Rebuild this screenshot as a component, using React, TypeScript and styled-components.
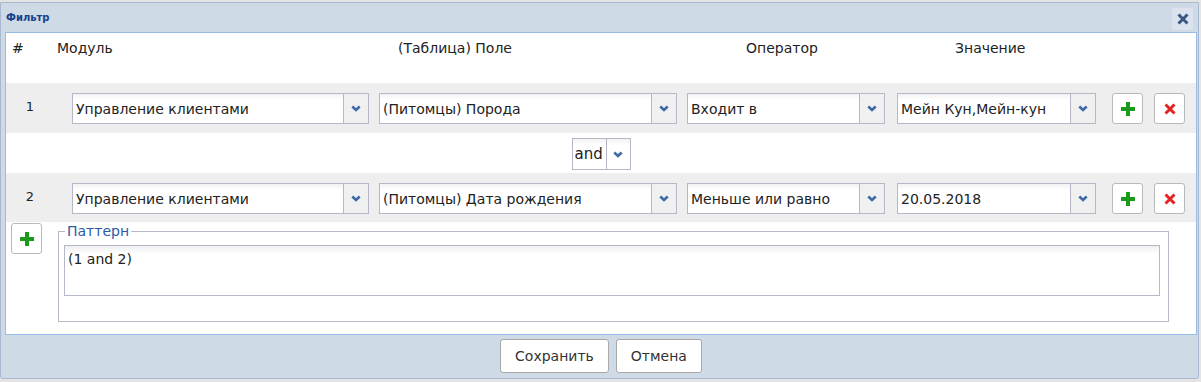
import styled, { createGlobalStyle } from 'styled-components'

const Global = createGlobalStyle`
  html, body {
    margin: 0;
    padding: 0;
    background: #e4e4e4;
  }
  body {
    font-family: 'DejaVu Sans', sans-serif;
    color: #222;
  }
`

const Window = styled.div`
  margin-top: 2px;
  width: 1199px;
  height: 377px;
  box-sizing: border-box;
  background: #cfdae7;
  border: 1px solid #a7b9cf;
  border-radius: 0 0 3px 3px;
  display: flex;
  flex-direction: column;
  padding: 0 1px 0 4px;
`

const TitleBar = styled.div`
  height: 29px;
  display: flex;
  flex-direction: row;
  align-items: center;
  padding-left: 1px;
`

const Title = styled.div`
  font-family: 'DejaVu Sans', sans-serif;
  font-size: 10px;
  font-weight: bold;
  color: #15428b;
  margin-right: auto;
`

const CloseButton = styled.div`
  width: 21px;
  height: 22px;
  margin-right: 4px;
  margin-top: 2px;
  background: #dbe4ee;
  border-radius: 2px;
  display: flex;
  align-items: center;
  justify-content: center;
`

const Panel = styled.div`
  height: 303px;
  box-sizing: border-box;
  background: #fff;
  border: 1px solid #99bbe8;
  display: flex;
  flex-direction: column;
`

const HeaderRow = styled.div`
  height: 50px;
  display: flex;
  flex-direction: row;
  padding-top: 6px;
  box-sizing: border-box;
`

const HeaderCell = styled.div<{ $w: number; $pl?: number }>`
  width: ${(p) => p.$w}px;
  padding-left: ${(p) => p.$pl ?? 0}px;
  box-sizing: border-box;
  flex: none;
  font-size: 14px;
  line-height: 18px;
  color: #222;
`

const Band = styled.div<{ $h: number }>`
  height: ${(p) => p.$h}px;
  background: #eeeeee;
  display: flex;
  flex-direction: row;
  align-items: flex-start;
  padding-top: 10px;
  box-sizing: border-box;
`

const RowNumber = styled.div`
  width: 48px;
  flex: none;
  text-align: center;
  font-size: 13px;
  line-height: 16px;
  padding-top: 6px;
`

const Select = styled.div<{ $w: number; $ml: number }>`
  width: ${(p) => p.$w}px;
  height: 31px;
  margin-left: ${(p) => p.$ml}px;
  flex: none;
  box-sizing: border-box;
  border: 1px solid #b5b8c8;
  background: linear-gradient(#f2f2f2, #fff 6px);
  display: flex;
  flex-direction: row;
`

const SelectText = styled.div`
  flex: 1;
  padding: 2px 0 0 3px;
  font-size: 14px;
  line-height: 27px;
  white-space: nowrap;
  overflow: hidden;
`

const Arrow = styled.div`
  width: 24px;
  flex: none;
  border-left: 1px solid #b5b8c8;
  background: #f0f0f0;
  display: flex;
  align-items: center;
  justify-content: center;
`

const Connector = styled.div`
  height: 40px;
  display: flex;
  justify-content: center;
  padding-top: 5px;
  box-sizing: border-box;
`

const AndSelect = styled.div`
  width: 59px;
  height: 32px;
  box-sizing: border-box;
  border: 1px solid #b5b8c8;
  display: flex;
  flex-direction: row;
  background: linear-gradient(#f2f2f2, #fff 6px);
`

const AndText = styled.div`
  width: 34px;
  box-sizing: border-box;
  padding: 1px 0 0 2px;
  font-size: 15px;
  line-height: 29px;
  border-right: 1px solid #b5b8c8;
`

const AndArrow = styled.div`
  flex: 1;
  display: flex;
  align-items: center;
  justify-content: center;
`

const IconButton = styled.div<{ $ml: number }>`
  width: 31px;
  height: 31px;
  margin-left: ${(p) => p.$ml}px;
  flex: none;
  box-sizing: border-box;
  border: 1px solid #b9b9b9;
  border-radius: 3px;
  background: #fff;
  display: flex;
  align-items: center;
  justify-content: center;
`

const PatternArea = styled.div`
  flex: 1;
  display: flex;
  flex-direction: row;
  align-items: flex-start;
  padding-top: 1px;
`

const Fieldset = styled.fieldset`
  width: 1111px;
  height: 99px;
  box-sizing: border-box;
  margin: 0 0 0 16px;
  padding: 0 8px 0 5px;
  border: 1px solid #b5b8c8;
`

const Legend = styled.legend`
  font-size: 14px;
  line-height: 16px;
  color: #2a5aa8;
  padding: 0 2px;
  margin-left: 1px;
`

const PatternInput = styled.textarea`
  display: block;
  width: 1096px;
  height: 51px;
  margin-top: 6px;
  box-sizing: border-box;
  border: 1px solid #b5b8c8;
  background: linear-gradient(#eef0f0, #fff 8px);
  padding: 5px 3px;
  font-family: 'DejaVu Sans', sans-serif;
  font-size: 14px;
  line-height: 16px;
  color: #222;
  resize: none;
  outline: none;
`

const Footer = styled.div`
  flex: 1;
  display: flex;
  flex-direction: row;
  justify-content: center;
  align-items: flex-start;
  gap: 7px;
  padding-top: 4px;
`

const FooterButton = styled.div`
  height: 34px;
  box-sizing: border-box;
  padding: 0 14px;
  border: 1px solid #a9a9a9;
  border-radius: 3px;
  background: #fff;
  font-size: 14px;
  line-height: 32px;
  color: #333;
`

const Chevron = () => (
  <svg width="10" height="7" viewBox="0 0 10 7">
    <path d="M1.3 1.5 L5 5 L8.7 1.5" fill="none" stroke="#3b69a8" strokeWidth="2.6" />
  </svg>
)

const Plus = () => (
  <svg width="14" height="14" viewBox="0 0 14 14">
    <rect x="5" y="0" width="4" height="14" fill="#1c9a1c" />
    <rect x="0" y="5" width="14" height="4" fill="#1c9a1c" />
  </svg>
)

const Cross = ({ color, size }: { color: string; size: number }) => (
  <svg width={size} height={size} viewBox="0 0 12 12">
    <path d="M1.5 1.5 L10.5 10.5 M10.5 1.5 L1.5 10.5" stroke={color} strokeWidth="3" />
  </svg>
)

type Condition = {
  n: number
  module: string
  field: string
  op: string
  value: string
}

const conditions: Condition[] = [
  {
    n: 1,
    module: 'Управление клиентами',
    field: '(Питомцы) Порода',
    op: 'Входит в',
    value: 'Мейн Кун,Мейн-кун',
  },
  {
    n: 2,
    module: 'Управление клиентами',
    field: '(Питомцы) Дата рождения',
    op: 'Меньше или равно',
    value: '20.05.2018',
  },
]

function SelectBox({ w, ml, text }: { w: number; ml: number; text: string }) {
  return (
    <Select $w={w} $ml={ml}>
      <SelectText>{text}</SelectText>
      <Arrow>
        <Chevron />
      </Arrow>
    </Select>
  )
}

function ConditionRow({ c, h }: { c: Condition; h: number }) {
  return (
    <Band $h={h}>
      <RowNumber>{c.n}</RowNumber>
      <SelectBox w={297} ml={18} text={c.module} />
      <SelectBox w={298} ml={10} text={c.field} />
      <SelectBox w={198} ml={10} text={c.op} />
      <SelectBox w={199} ml={12} text={c.value} />
      <IconButton $ml={16}>
        <Plus />
      </IconButton>
      <IconButton $ml={11}>
        <Cross color="#e32424" size={12} />
      </IconButton>
    </Band>
  )
}

export default function App() {
  return (
    <>
      <Global />
      <Window>
        <TitleBar>
          <Title>Фильтр</Title>
          <CloseButton>
            <Cross color="#3a5883" size={12} />
          </CloseButton>
        </TitleBar>
        <Panel>
          <HeaderRow>
            <HeaderCell $w={51} $pl={6}>#</HeaderCell>
            <HeaderCell $w={341}>Модуль</HeaderCell>
            <HeaderCell $w={348}>(Таблица) Поле</HeaderCell>
            <HeaderCell $w={209}>Оператор</HeaderCell>
            <HeaderCell $w={200}>Значение</HeaderCell>
          </HeaderRow>
          <ConditionRow c={conditions[0]} h={50} />
          <Connector>
            <AndSelect>
              <AndText>and</AndText>
              <AndArrow>
                <Chevron />
              </AndArrow>
            </AndSelect>
          </Connector>
          <ConditionRow c={conditions[1]} h={49} />
          <PatternArea>
            <IconButton $ml={5}>
              <Plus />
            </IconButton>
            <Fieldset>
              <Legend>Паттерн</Legend>
              <PatternInput readOnly value="(1 and 2)" />
            </Fieldset>
          </PatternArea>
        </Panel>
        <Footer>
          <FooterButton>Сохранить</FooterButton>
          <FooterButton>Отмена</FooterButton>
        </Footer>
      </Window>
    </>
  )
}
